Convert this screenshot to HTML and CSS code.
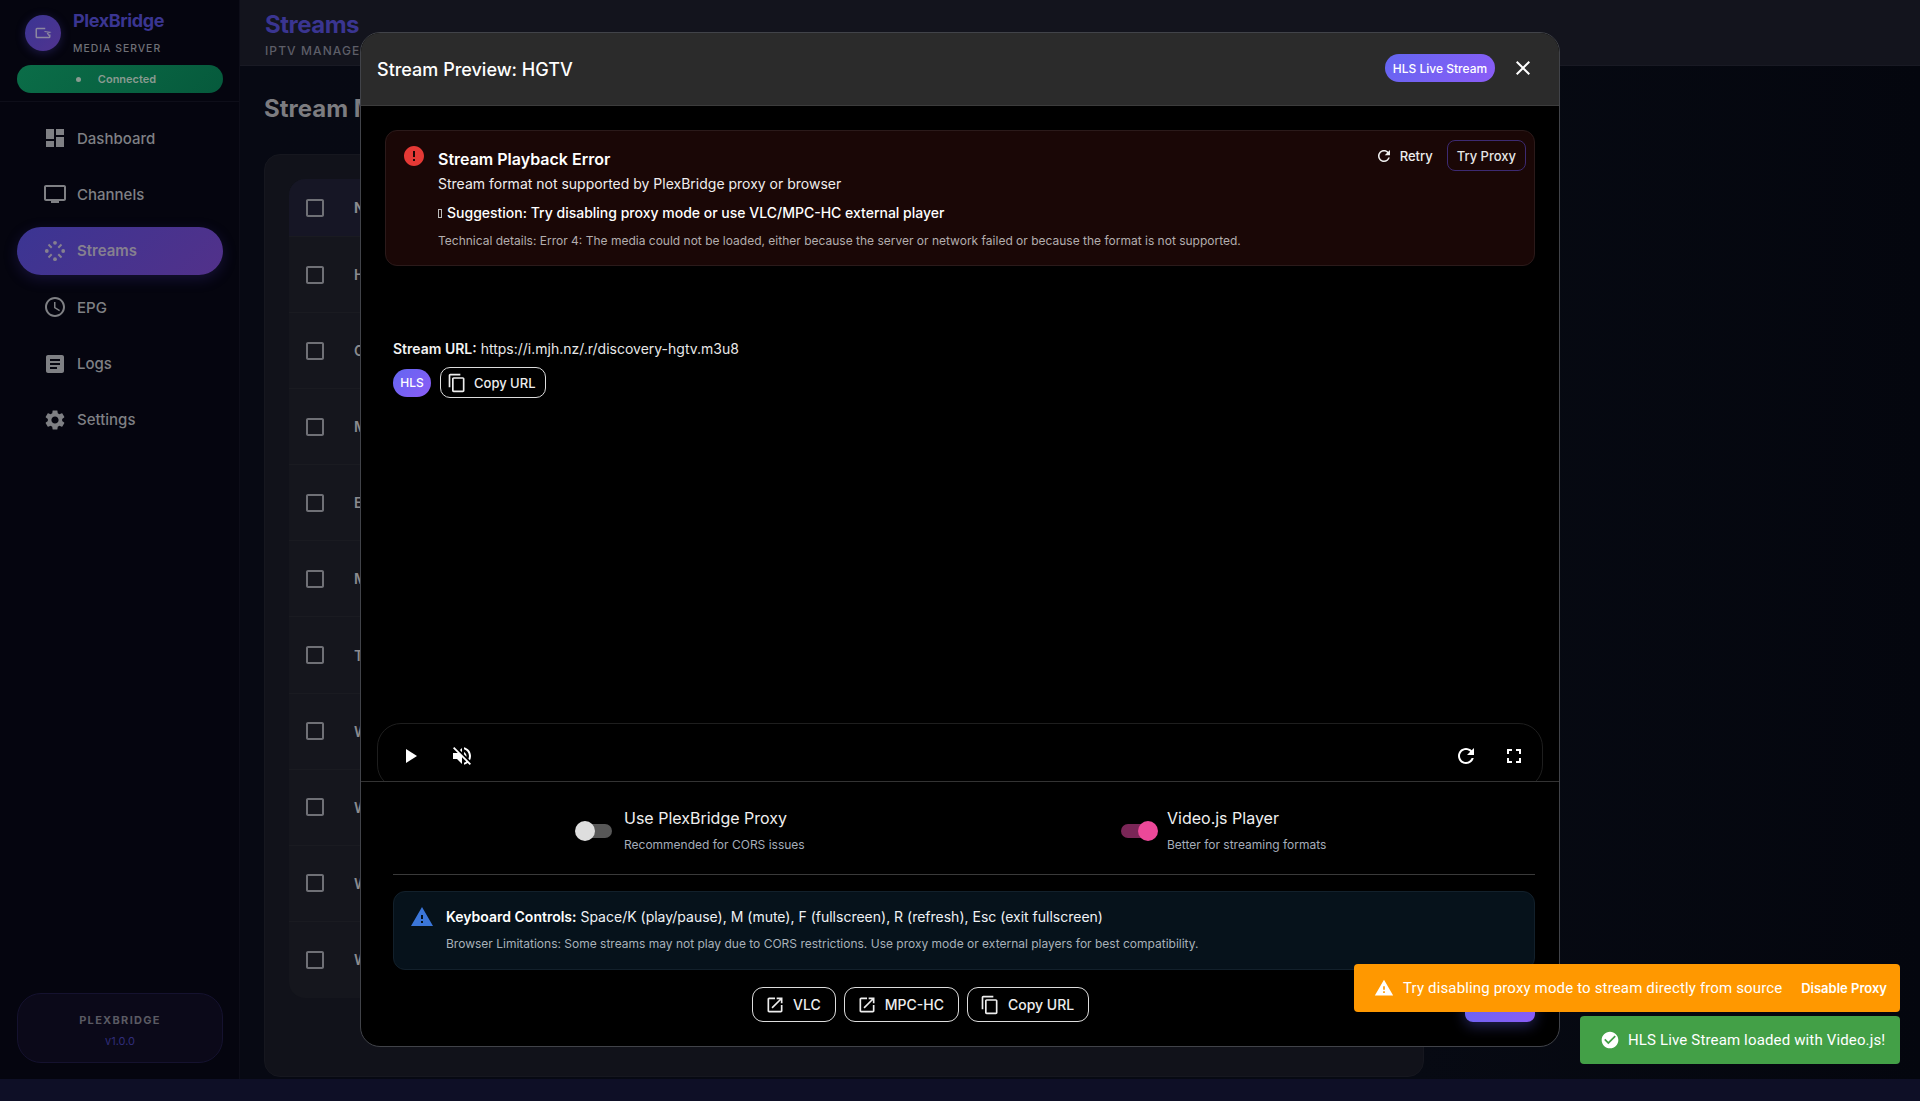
FILE: index.html
```html
<!DOCTYPE html>
<html lang="en">

<head>
    <meta charset="UTF-8">
    <meta name="viewport" content="width=device-width, initial-scale=1.0">
    <title>PlexBridge - Streams</title>
    <link rel="stylesheet" href="styles.css">
</head>

<body>
    <div class="app">
        <!-- Sidebar -->
        <aside class="sidebar">
            <div class="sidebar-head">
                <div class="brand">
                    <div class="logo">
                        <svg viewBox="0 0 24 24" width="18" height="18" fill="none" stroke="currentColor" stroke-width="2"><path d="M15 6H4a1 1 0 0 0-1 1v10a1 1 0 0 0 1 1h16a1 1 0 0 0 1-1v-3"/><path d="M14 10l7 1-3 1.500 2 3" stroke-width="1.500"/></svg>
                    </div>
                    <div>
                        <div class="brand-name">PlexBridge</div>
                        <div class="brand-sub">MEDIA SERVER</div>
                    </div>
                </div>
                <div class="status-pill"><span class="status-dot"></span>Connected</div>
            </div>

            <nav class="nav">
                <a class="nav-item">
                    <svg class="icon" viewBox="0 0 24 24"><path d="M3 13h8V3H3v10zm0 8h8v-6H3v6zm10 0h8V11h-8v10zm0-18v6h8V3h-8z"/></svg>
                    Dashboard
                </a>
                <a class="nav-item">
                    <svg class="icon" viewBox="0 0 24 24"><path d="M21 3H3c-1.100 0-2 .9-2 2v12c0 1.100.9 2 2 2h5v2h8v-2h5c1.100 0 1.990-.9 1.990-2L23 5c0-1.100-.9-2-2-2zm0 14H3V5h18v12z"/></svg>
                    Channels
                </a>
                <a class="nav-item active">
                    <svg class="icon" viewBox="0 0 24 24"><circle cx="12" cy="3.800" r="1.900"/><circle cx="12" cy="20.200" r="1.900"/><circle cx="3.800" cy="12" r="1.900"/><circle cx="20.200" cy="12" r="1.900"/><path d="M5.500 5.500l3.200 3.200M18.500 5.500l-3.200 3.200M5.500 18.500l3.200-3.200M18.500 18.500l-3.200-3.200" fill="none" stroke="currentColor" stroke-width="2"/></svg>
                    Streams
                </a>
                <a class="nav-item">
                    <svg class="icon" viewBox="0 0 24 24"><path d="M11.990 2C6.470 2 2 6.480 2 12s4.470 10 9.990 10C17.520 22 22 17.520 22 12S17.520 2 11.990 2zM12 20c-4.420 0-8-3.580-8-8s3.580-8 8-8 8 3.580 8 8-3.580 8-8 8zm.5-13H11v6l5.250 3.150.75-1.230-4.500-2.670z"/></svg>
                    EPG
                </a>
                <a class="nav-item">
                    <svg class="icon" viewBox="0 0 24 24"><path d="M19 3H5c-1.100 0-2 .9-2 2v14c0 1.100.9 2 2 2h14c1.100 0 2-.9 2-2V5c0-1.100-.9-2-2-2zm-5 14H7v-2h7v2zm3-4H7v-2h10v2zm0-4H7V7h10v2z"/></svg>
                    Logs
                </a>
                <a class="nav-item">
                    <svg class="icon" viewBox="0 0 24 24"><path d="M19.140 12.940c.04-.3.06-.61.06-.94 0-.32-.02-.64-.07-.94l2.030-1.580c.18-.14.23-.41.12-.61l-1.920-3.320c-.12-.22-.37-.29-.59-.22l-2.390.96c-.5-.38-1.030-.7-1.620-.94l-.36-2.540c-.04-.24-.24-.41-.48-.41h-3.840c-.24 0-.43.17-.47.41l-.36 2.540c-.59.24-1.130.57-1.620.94l-2.390-.96c-.22-.08-.47 0-.59.22L2.740 8.870c-.12.21-.08.47.12.61l2.030 1.580c-.05.3-.09.63-.09.94s.02.64.07.94l-2.030 1.580c-.18.14-.23.41-.12.61l1.920 3.320c.12.22.37.29.59.22l2.390-.96c.5.38 1.030.7 1.620.94l.36 2.540c.05.24.24.41.48.41h3.840c.24 0 .44-.17.47-.41l.36-2.540c.59-.24 1.130-.56 1.620-.94l2.390.96c.22.08.47 0 .59-.22l1.920-3.320c.12-.22.07-.47-.12-.61l-2.010-1.580zM12 15.600c-1.980 0-3.600-1.620-3.600-3.600s1.620-3.600 3.600-3.600 3.600 1.620 3.600 3.600-1.620 3.600-3.600 3.600z"/></svg>
                    Settings
                </a>
            </nav>

            <div class="sidebar-foot">
                <div class="foot-name">PLEXBRIDGE</div>
                <div class="foot-version">v1.0.0</div>
            </div>
        </aside>

        <!-- Main area, mostly behind the dialog -->
        <main class="main">
            <header class="topbar">
                <div class="topbar-title">Streams</div>
                <div class="topbar-sub">IPTV MANAGEMENT</div>
            </header>
            <div class="content">
                <h1 class="page-title">Stream Manager</h1>
                <div class="card">
                    <div class="table">
                        <div class="table-row table-head">
                            <svg class="check" viewBox="0 0 24 24"><path d="M19 5v14H5V5h14m0-2H5c-1.100 0-2 .9-2 2v14c0 1.100.9 2 2 2h14c1.100 0 2-.9 2-2V5c0-1.100-.9-2-2-2z"/></svg>
                            <span>Name</span>
                        </div>
                        <div class="table-row">
                            <svg class="check" viewBox="0 0 24 24"><path d="M19 5v14H5V5h14m0-2H5c-1.100 0-2 .9-2 2v14c0 1.100.9 2 2 2h14c1.100 0 2-.9 2-2V5c0-1.100-.9-2-2-2z"/></svg>
                            <span>HGTV</span>
                        </div>
                        <div class="table-row">
                            <svg class="check" viewBox="0 0 24 24"><path d="M19 5v14H5V5h14m0-2H5c-1.100 0-2 .9-2 2v14c0 1.100.9 2 2 2h14c1.100 0 2-.9 2-2V5c0-1.100-.9-2-2-2z"/></svg>
                            <span>CNN</span>
                        </div>
                        <div class="table-row">
                            <svg class="check" viewBox="0 0 24 24"><path d="M19 5v14H5V5h14m0-2H5c-1.100 0-2 .9-2 2v14c0 1.100.9 2 2 2h14c1.100 0 2-.9 2-2V5c0-1.100-.9-2-2-2z"/></svg>
                            <span>MTV</span>
                        </div>
                        <div class="table-row">
                            <svg class="check" viewBox="0 0 24 24"><path d="M19 5v14H5V5h14m0-2H5c-1.100 0-2 .9-2 2v14c0 1.100.9 2 2 2h14c1.100 0 2-.9 2-2V5c0-1.100-.9-2-2-2z"/></svg>
                            <span>ESPN</span>
                        </div>
                        <div class="table-row">
                            <svg class="check" viewBox="0 0 24 24"><path d="M19 5v14H5V5h14m0-2H5c-1.100 0-2 .9-2 2v14c0 1.100.9 2 2 2h14c1.100 0 2-.9 2-2V5c0-1.100-.9-2-2-2z"/></svg>
                            <span>MSNBC</span>
                        </div>
                        <div class="table-row">
                            <svg class="check" viewBox="0 0 24 24"><path d="M19 5v14H5V5h14m0-2H5c-1.100 0-2 .9-2 2v14c0 1.100.9 2 2 2h14c1.100 0 2-.9 2-2V5c0-1.100-.9-2-2-2z"/></svg>
                            <span>TNT</span>
                        </div>
                        <div class="table-row">
                            <svg class="check" viewBox="0 0 24 24"><path d="M19 5v14H5V5h14m0-2H5c-1.100 0-2 .9-2 2v14c0 1.100.9 2 2 2h14c1.100 0 2-.9 2-2V5c0-1.100-.9-2-2-2z"/></svg>
                            <span>WGN</span>
                        </div>
                        <div class="table-row">
                            <svg class="check" viewBox="0 0 24 24"><path d="M19 5v14H5V5h14m0-2H5c-1.100 0-2 .9-2 2v14c0 1.100.9 2 2 2h14c1.100 0 2-.9 2-2V5c0-1.100-.9-2-2-2z"/></svg>
                            <span>WABC</span>
                        </div>
                        <div class="table-row">
                            <svg class="check" viewBox="0 0 24 24"><path d="M19 5v14H5V5h14m0-2H5c-1.100 0-2 .9-2 2v14c0 1.100.9 2 2 2h14c1.100 0 2-.9 2-2V5c0-1.100-.9-2-2-2z"/></svg>
                            <span>WNBC</span>
                        </div>
                        <div class="table-row">
                            <svg class="check" viewBox="0 0 24 24"><path d="M19 5v14H5V5h14m0-2H5c-1.100 0-2 .9-2 2v14c0 1.100.9 2 2 2h14c1.100 0 2-.9 2-2V5c0-1.100-.9-2-2-2z"/></svg>
                            <span>WCBS</span>
                        </div>
                    </div>
                </div>
            </div>
        </main>
    </div>

    <!-- Stream preview dialog -->
    <section class="modal">
        <div class="modal-head">
            <h2 class="modal-title">Stream Preview: HGTV</h2>
            <span class="badge badge-live">HLS Live Stream</span>
            <svg class="icon close-icon" viewBox="0 0 24 24"><path d="M19 6.410 17.590 5 12 10.590 6.410 5 5 6.410 10.590 12 5 17.590 6.410 19 12 13.410 17.590 19 19 17.590 13.410 12z"/></svg>
        </div>

        <div class="player">
            <div class="error-box">
                <svg class="icon error-icon" viewBox="0 0 24 24"><path d="M12 2C6.480 2 2 6.480 2 12s4.480 10 10 10 10-4.480 10-10S17.520 2 12 2zm1 15h-2v-2h2v2zm0-4h-2V7h2v6z"/></svg>
                <div class="error-text">
                    <div class="error-title">Stream Playback Error</div>
                    <div class="error-msg">Stream format not supported by PlexBridge proxy or browser</div>
                    <div class="error-hint"><span class="tofu"></span>Suggestion: Try disabling proxy mode or use VLC/MPC-HC external player</div>
                    <div class="error-tech">Technical details: Error 4: The media could not be loaded, either because the server or network failed or because the format is not supported.</div>
                </div>
                <div class="error-actions">
                    <span class="retry">
                        <svg class="icon" viewBox="0 0 24 24"><path d="M17.650 6.350C16.200 4.900 14.210 4 12 4c-4.420 0-7.990 3.580-7.990 8s3.570 8 7.990 8c3.730 0 6.840-2.550 7.730-6h-2.080c-.82 2.330-3.040 4-5.650 4-3.310 0-6-2.690-6-6s2.690-6 6-6c1.660 0 3.140.69 4.220 1.780L13 11h7V4l-2.350 2.350z"/></svg>
                        Retry
                    </span>
                    <span class="try-proxy">Try Proxy</span>
                </div>
            </div>

            <div class="stream-info">
                <div class="stream-url"><b>Stream URL:</b> https://i.mjh.nz/.r/discovery-hgtv.m3u8</div>
                <div class="stream-tags">
                    <span class="badge badge-hls">HLS</span>
                    <span class="btn-small">
                        <svg class="icon" viewBox="0 0 24 24"><path d="M16 1H4c-1.100 0-2 .9-2 2v14h2V3h12V1zm3 4H8c-1.100 0-2 .9-2 2v14c0 1.100.9 2 2 2h11c1.100 0 2-.9 2-2V7c0-1.100-.9-2-2-2zm0 16H8V7h11v14z"/></svg>
                        Copy URL
                    </span>
                </div>
            </div>

            <div class="controls">
                <svg class="icon" viewBox="0 0 24 24"><path d="M8 5v14l11-7z"/></svg>
                <svg class="icon" viewBox="0 0 24 24"><path d="M16.500 12c0-1.770-1.020-3.290-2.500-4.030v2.210l2.450 2.450c.03-.2.05-.41.05-.63zm2.500 0c0 .94-.2 1.820-.54 2.640l1.510 1.510C20.630 14.910 21 13.500 21 12c0-4.280-2.990-7.860-7-8.770v2.060c2.890.86 5 3.540 5 6.710zM4.270 3 3 4.270 7.730 9H3v6h4l5 5v-6.730l4.250 4.250c-.67.52-1.420.93-2.250 1.180v2.060c1.380-.31 2.630-.95 3.690-1.810L19.730 21 21 19.730l-9-9L4.270 3zM12 4 9.910 6.090 12 8.180V4z"/></svg>
                <span class="controls-gap"></span>
                <div class="controls-right">
                    <svg class="icon" viewBox="0 0 24 24"><path d="M17.650 6.350C16.200 4.900 14.210 4 12 4c-4.420 0-7.990 3.580-7.990 8s3.570 8 7.990 8c3.730 0 6.840-2.550 7.730-6h-2.080c-.82 2.330-3.040 4-5.650 4-3.310 0-6-2.690-6-6s2.690-6 6-6c1.660 0 3.140.69 4.220 1.780L13 11h7V4l-2.350 2.350z"/></svg>
                    <svg class="icon" viewBox="0 0 24 24"><path d="M7 14H5v5h5v-2H7v-3zm-2-4h2V7h3V5H5v5zm12 7h-3v2h5v-5h-2v3zM14 5v2h3v3h2V5h-5z"/></svg>
                </div>
            </div>
        </div>

        <div class="modal-foot">
            <div class="toggles">
                <div class="toggle">
                    <span class="switch"><span class="thumb"></span></span>
                    <div>
                        <div class="toggle-label">Use PlexBridge Proxy</div>
                        <div class="toggle-sub">Recommended for CORS issues</div>
                    </div>
                </div>
                <div class="toggle">
                    <span class="switch on"><span class="thumb"></span></span>
                    <div>
                        <div class="toggle-label">Video.js Player</div>
                        <div class="toggle-sub">Better for streaming formats</div>
                    </div>
                </div>
            </div>

            <div class="info-box">
                <svg class="icon info-icon" viewBox="0 0 24 24"><path d="M1 21h22L12 2 1 21zm12-3h-2v-2h2v2zm0-4h-2v-4h2v4z"/></svg>
                <div>
                    <div class="info-main"><b>Keyboard Controls:</b> Space/K (play/pause), M (mute), F (fullscreen), R (refresh), Esc (exit fullscreen)</div>
                    <div class="info-sub">Browser Limitations: Some streams may not play due to CORS restrictions. Use proxy mode or external players for best compatibility.</div>
                </div>
            </div>

            <div class="actions">
                <span class="btn">
                    <svg class="icon" viewBox="0 0 24 24"><path d="M19 19H5V5h7V3H5c-1.110 0-2 .9-2 2v14c0 1.100.89 2 2 2h14c1.100 0 2-.9 2-2v-7h-2v7zM14 3v2h3.590l-9.830 9.830 1.410 1.410L19 6.410V10h2V3h-7z"/></svg>
                    VLC
                </span>
                <span class="btn">
                    <svg class="icon" viewBox="0 0 24 24"><path d="M19 19H5V5h7V3H5c-1.110 0-2 .9-2 2v14c0 1.100.89 2 2 2h14c1.100 0 2-.9 2-2v-7h-2v7zM14 3v2h3.590l-9.830 9.830 1.410 1.410L19 6.410V10h2V3h-7z"/></svg>
                    MPC-HC
                </span>
                <span class="btn">
                    <svg class="icon" viewBox="0 0 24 24"><path d="M16 1H4c-1.100 0-2 .9-2 2v14h2V3h12V1zm3 4H8c-1.100 0-2 .9-2 2v14c0 1.100.9 2 2 2h11c1.100 0 2-.9 2-2V7c0-1.100-.9-2-2-2zm0 16H8V7h11v14z"/></svg>
                    Copy URL
                </span>
                <span class="btn-close">Close</span>
            </div>
        </div>
    </section>

    <!-- Snackbars -->
    <div class="toasts">
        <div class="toast toast-warning">
            <svg class="icon" viewBox="0 0 24 24"><path d="M1 21h22L12 2 1 21zm12-3h-2v-2h2v2zm0-4h-2v-4h2v4z"/></svg>
            <span>Try disabling proxy mode to stream directly from source</span>
            <b class="toast-action">Disable Proxy</b>
        </div>
        <div class="toast toast-success">
            <svg class="icon" viewBox="0 0 24 24"><path d="M12 2C6.480 2 2 6.480 2 12s4.480 10 10 10 10-4.480 10-10S17.520 2 12 2zm-2 15-5-5 1.410-1.410L10 14.170l7.590-7.590L19 8l-9 9z"/></svg>
            <span>HLS Live Stream loaded with Video.js!</span>
        </div>
    </div>
</body>

</html>
```

FILE: styles.css
```css
* {
    margin: 0;
    padding: 0;
    box-sizing: border-box;
}

body {
    width: 1920px;
    height: 1101px;
    overflow: hidden;
    position: relative;
    font-family: Inter, "Liberation Sans", sans-serif;
    background-color: #0e0f26;
    color: #fff;
}

.icon {
    width: 24px;
    height: 24px;
    flex: none;
    fill: currentColor;
}

.app {
    display: flex;
    height: 1079px;
}

/* Sidebar */

.sidebar {
    width: 240px;
    flex: none;
    display: flex;
    flex-direction: column;
    background-color: #05050f;
    border-right: 1px solid #0d0d18;
}

.sidebar-head {
    height: 102px;
    padding: 10px 16px 0 17px;
    border-bottom: 1px solid #0e0e19;
}

.brand {
    display: flex;
    gap: 12px;
    padding-left: 8px;
}

.logo {
    width: 36px;
    height: 36px;
    margin-top: 5px;
    border-radius: 50%;
    display: flex;
    align-items: center;
    justify-content: center;
    color: #8b87a0;
    background: linear-gradient(135deg, #3b3593, #50338f);
    box-shadow: 0 2px 10px rgba(70, 60, 170, 0.35);
}

.brand-name {
    font-size: 18px;
    line-height: 22px;
    font-weight: 700;
    letter-spacing: -0.4px;
    color: #3a3591;
}

.brand-sub {
    margin-top: 9px;
    font-size: 10.4px;
    line-height: 16px;
    font-weight: 500;
    letter-spacing: 1px;
    color: #6f7077;
}

.status-pill {
    height: 28px;
    margin-top: 8px;
    border-radius: 14px;
    display: flex;
    align-items: center;
    justify-content: center;
    gap: 17px;
    padding-right: 8px;
    font-size: 11px;
    font-weight: 600;
    color: #8a9a91;
    background: linear-gradient(135deg, #0b6d48, #065a3c);
}

.status-dot {
    width: 5px;
    height: 5px;
    border-radius: 50%;
    background-color: #8a9a91;
}

.nav {
    display: flex;
    flex-direction: column;
    gap: 8.4px;
    padding: 12px 16px 0 17px;
}

.nav-item {
    height: 48px;
    display: flex;
    align-items: center;
    gap: 10px;
    padding-left: 26px;
    border-radius: 24px;
    font-size: 15px;
    font-weight: 500;
    color: #7f8084;
}

.nav-item.active {
    color: #86808f;
    font-weight: 600;
    background: linear-gradient(135deg, #3b3593, #52318a);
    box-shadow: 0 4px 14px rgba(70, 55, 170, 0.25);
}

.sidebar-foot {
    height: 70px;
    margin: auto 16px 16px 17px;
    padding-top: 18px;
    text-align: center;
    border-radius: 24px;
    background-color: #0b0919;
    border: 1px solid #15122f;
}

.foot-name {
    font-size: 11px;
    line-height: 16px;
    font-weight: 700;
    letter-spacing: 1.3px;
    color: #5a5a63;
}

.foot-version {
    margin-top: 5px;
    font-size: 11px;
    line-height: 16px;
    color: #312d7b;
}

/* Main area */

.main {
    flex: 1;
    background: linear-gradient(90deg, #070913, #070a13 70%, #04060e);
}

.topbar {
    height: 66px;
    padding: 10px 25px 0;
    background-color: #13141d;
    border-bottom: 1px solid #191a24;
}

.topbar-title {
    font-size: 24px;
    line-height: 30px;
    font-weight: 700;
    letter-spacing: -0.5px;
    color: #3a3591;
}

.topbar-sub {
    margin-top: 3px;
    font-size: 12px;
    line-height: 16px;
    font-weight: 500;
    letter-spacing: 1.1px;
    color: #5d5e68;
}

.content {
    padding: 27px 24px 0;
}

.page-title {
    font-size: 24px;
    line-height: 32px;
    font-weight: 700;
    color: #7c7c80;
}

.card {
    width: 1160px;
    height: 923px;
    margin-top: 29px;
    padding: 24px;
    border-radius: 16px;
    background-color: #11121a;
    border: 1px solid #16171f;
}

.table {
    border-radius: 16px;
    overflow: hidden;
    background-color: #15161d;
}

.table-row {
    height: 76.1px;
    display: flex;
    align-items: center;
    gap: 27px;
    padding-left: 14px;
    font-size: 14px;
    font-weight: 600;
    color: #8a8b8f;
    border-bottom: 1px solid #1a1b21;
}

.table-head {
    height: 58px;
    font-weight: 700;
    background-color: #161625;
}

.table-row:last-child {
    border-bottom: none;
}

.check {
    width: 24px;
    height: 24px;
    flex: none;
    fill: #6f7076;
}

/* Dialog */

.modal {
    position: absolute;
    left: 360px;
    top: 32px;
    width: 1200px;
    height: 1015px;
    display: flex;
    flex-direction: column;
    overflow: hidden;
    border-radius: 20px;
    background-color: #000;
    border: 1px solid #414349;
}

.modal-head {
    height: 73px;
    flex: none;
    display: flex;
    align-items: center;
    padding: 0 24px 0 16px;
    background-color: #2b2b2b;
    border-bottom: 1px solid #3c3c3c;
}

.modal-title {
    flex: 1;
    font-size: 18px;
    font-weight: 500;
}

.badge {
    display: flex;
    align-items: center;
    justify-content: center;
    height: 28px;
    border-radius: 14px;
    font-size: 12px;
    font-weight: 500;
    background: linear-gradient(135deg, #6366f1, #8b5cf6);
}

.badge-live {
    width: 110px;
    margin-top: -2px;
}

.close-icon {
    margin: -2px 0 0 16px;
}

.player {
    height: 676px;
    flex: none;
    display: flex;
    flex-direction: column;
    overflow: hidden;
    border-bottom: 1px solid #333;
}

.error-box {
    height: 136px;
    flex: none;
    margin: 24px 24px 0;
    padding: 13px 8px 0 16px;
    display: flex;
    gap: 12px;
    border-radius: 12px;
    background-color: #1a0706;
    border: 1px solid #2b1a1a;
}

.error-icon {
    color: #e53935;
}

.error-text {
    flex: 1;
}

.error-title {
    margin-top: 3px;
    font-size: 16px;
    line-height: 24px;
    font-weight: 600;
}

.error-msg {
    margin-top: 3px;
    font-size: 14px;
    line-height: 20px;
    color: #f0eded;
}

.error-hint {
    margin-top: 9px;
    font-size: 14px;
    line-height: 20px;
    font-weight: 500;
}

/* missing-glyph box in front of the suggestion */
.tofu {
    display: inline-block;
    width: 4px;
    height: 9px;
    margin-right: 5px;
    border: 1px solid #bbb;
}

.error-tech {
    margin-top: 9px;
    font-size: 12px;
    line-height: 18px;
    color: #b3aeae;
}

.error-actions {
    display: flex;
    align-items: flex-start;
    gap: 14px;
    margin-top: -4px;
}

.retry {
    height: 31px;
    display: flex;
    align-items: center;
    gap: 7px;
    font-size: 13px;
    font-weight: 500;
    color: #eee;
}

.retry .icon {
    width: 18px;
    height: 18px;
}

.try-proxy {
    height: 31px;
    padding: 0 9px;
    display: flex;
    align-items: center;
    border-radius: 8px;
    font-size: 13px;
    font-weight: 500;
    color: #e5e5e5;
    border: 1px solid #3d2a72;
}

.stream-info {
    margin: 73px 0 0 32px;
}

.stream-url {
    font-size: 14px;
    line-height: 20px;
    color: #e8e8e8;
}

.stream-url b {
    font-weight: 600;
    color: #f3f3f3;
}

.stream-tags {
    margin-top: 8px;
    display: flex;
    align-items: center;
    gap: 9px;
}

.badge-hls {
    width: 38px;
}

.btn-small {
    height: 31px;
    padding: 0 9px 0 6px;
    display: flex;
    align-items: center;
    gap: 7px;
    border-radius: 10px;
    font-size: 13px;
    font-weight: 500;
    color: #eee;
    border: 1px solid #ddd;
}

.btn-small .icon {
    width: 20px;
    height: 20px;
}

.controls {
    height: 66px;
    flex: none;
    margin: auto 16px -8px;
    padding: 0 16px 0 20px;
    display: flex;
    align-items: center;
    gap: 28px;
    border-radius: 24px;
    border: 1px solid #1e1e1e;
}

.controls-gap {
    flex: 1;
}

.controls-right {
    display: flex;
    gap: 24px;
}

.modal-foot {
    flex: 1;
    padding: 0 24px 0 32px;
    display: flex;
    flex-direction: column;
}

.toggles {
    height: 93px;
    flex: none;
    padding: 24px 0 0 182px;
    display: grid;
    grid-template-columns: 546px 1fr;
    border-bottom: 1px solid #3a3a3a;
}

.toggle {
    display: flex;
    gap: 12px;
}

.toggle:last-child {
    gap: 9px;
}

.switch {
    position: relative;
    width: 37px;
    height: 14px;
    margin-top: 18px;
    flex: none;
    border-radius: 7px;
    background-color: #575757;
    background-clip: content-box;
    padding-left: 3px;
}

.switch.on {
    padding-left: 0;
    padding-right: 3px;
    background-color: #7a2657;
}

.thumb {
    position: absolute;
    left: 0;
    top: -3px;
    width: 20px;
    height: 20px;
    border-radius: 50%;
    background-color: #dedede;
}

.switch.on .thumb {
    left: 17px;
    background-color: #ec4899;
}

.toggle-label {
    font-size: 16px;
    line-height: 24px;
    color: #f0f0f0;
}

.toggle-sub {
    margin-top: 5px;
    font-size: 12px;
    line-height: 20px;
    color: #a5adba;
}

.info-box {
    height: 79px;
    flex: none;
    margin-top: 16px;
    padding: 13px 16px 0;
    display: flex;
    gap: 12px;
    border-radius: 12px;
    background-color: #06121b;
    border: 1px solid #12202b;
}

.info-icon {
    color: #3b76d9;
}

.info-main {
    font-size: 14px;
    line-height: 24px;
    color: #eef1f4;
}

.info-main b {
    font-weight: 600;
    color: #fff;
}

.info-sub {
    margin-top: 6px;
    font-size: 12px;
    line-height: 18px;
    color: #a8b1b9;
}

.actions {
    margin-top: 17px;
    padding-left: 359px;
    display: flex;
    gap: 8px;
}

.btn {
    height: 35px;
    padding: 0 14px 0 12px;
    display: flex;
    align-items: center;
    gap: 8px;
    border-radius: 11px;
    font-size: 14px;
    font-weight: 500;
    color: #eee;
    border: 1px solid #ddd;
}

.btn .icon {
    width: 20px;
    height: 20px;
}

.btn-close {
    width: 70px;
    height: 35px;
    margin-left: auto;
    display: flex;
    align-items: center;
    justify-content: center;
    border-radius: 8px;
    font-size: 14px;
    background: linear-gradient(135deg, #6366f1, #8b5cf6);
    box-shadow: 0 4px 14px rgba(99, 102, 241, 0.35);
}

/* Snackbars */

.toasts {
    position: absolute;
    right: 20px;
    top: 964px;
    display: flex;
    flex-direction: column;
    align-items: flex-end;
    gap: 4px;
}

.toast {
    height: 48px;
    display: flex;
    align-items: center;
    border-radius: 4px;
    font-family: Roboto, "Liberation Sans", sans-serif;
    font-size: 15px;
    letter-spacing: 0.15px;
}

.toast .icon {
    width: 20px;
    height: 20px;
}

.toast-warning {
    width: 546px;
    padding: 0 13px 0 20px;
    gap: 9px;
    background-color: #ff9800;
}

.toast-action {
    margin-left: auto;
    font-family: Inter, "Liberation Sans", sans-serif;
    font-size: 13px;
    font-weight: 600;
    letter-spacing: 0;
}

.toast-success {
    width: 320px;
    padding: 0 0 0 20px;
    gap: 8px;
    background-color: #43a047;
}
```
